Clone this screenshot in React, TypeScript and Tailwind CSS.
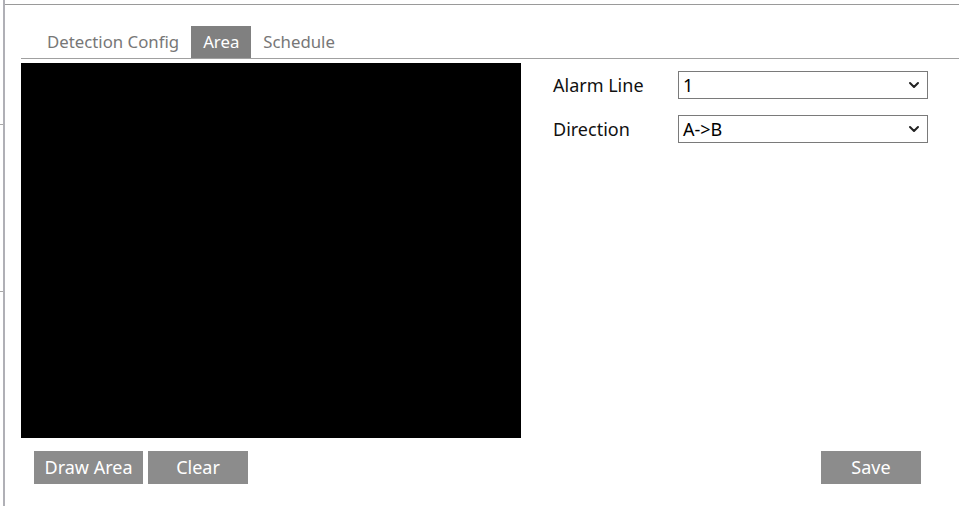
import { ChevronDown } from "lucide-react";

const font = { fontFamily: '"Noto Sans", "Open Sans", sans-serif' };

function Select({ value }: { value: string }) {
  return (
    <div className="flex h-[28px] w-[250px] items-center justify-between border border-[#7a7a7a] bg-white pl-[4px] pr-[5px] text-[18px] text-black">
      <span>{value}</span>
      <ChevronDown size={16} strokeWidth={3} className="text-[#222]" />
    </div>
  );
}

export default function App() {
  return (
    <div className="flex h-[506px] w-[959px] overflow-hidden bg-white" style={font}>
      {/* left edge of the sidebar */}
      <div className="flex w-[3px] flex-col">
        <div className="h-[124px]" />
        <div className="h-px bg-[#a8a8a8]" />
        <div className="h-[166px]" />
        <div className="h-px bg-[#a8a8a8]" />
      </div>
      <div className="w-[2px] bg-[#b0b0b6]" />

      <div className="flex flex-1 flex-col pt-[4px]">
        <div className="h-px bg-[#9a9a9a]" />

        <div className="ml-[16px] mt-[21px] flex flex-col">
          {/* tabs */}
          <div className="flex h-[33px] border-b border-[#a0a0a0] pl-[14px] text-[16.8px]">
            <div className="flex items-center px-[12px] text-[#777]">Detection Config</div>
            <div className="flex items-center bg-[#808080] px-[12px] text-white">Area</div>
            <div className="flex items-center px-[12px] text-[#777]">Schedule</div>
          </div>

          <div className="mt-[4px] flex">
            <div className="h-[375px] w-[500px] bg-black" />
            <div className="ml-[32px] mt-[8px] flex flex-col gap-[16px] text-[18px] text-[#111]">
              <div className="flex items-center">
                <span className="w-[125px]">Alarm Line</span>
                <Select value="1" />
              </div>
              <div className="flex items-center">
                <span className="w-[125px]">Direction</span>
                <Select value="A->B" />
              </div>
            </div>
          </div>

          <div className="mt-[13px] flex w-[900px] pl-[13px] text-[18px] text-white">
            <button className="h-[33px] w-[109px] bg-[#8c8c8c]">Draw Area</button>
            <button className="ml-[5px] h-[33px] w-[100px] bg-[#8c8c8c]">Clear</button>
            <button className="ml-auto h-[33px] w-[100px] bg-[#8c8c8c]">Save</button>
          </div>
        </div>
      </div>
    </div>
  );
}
